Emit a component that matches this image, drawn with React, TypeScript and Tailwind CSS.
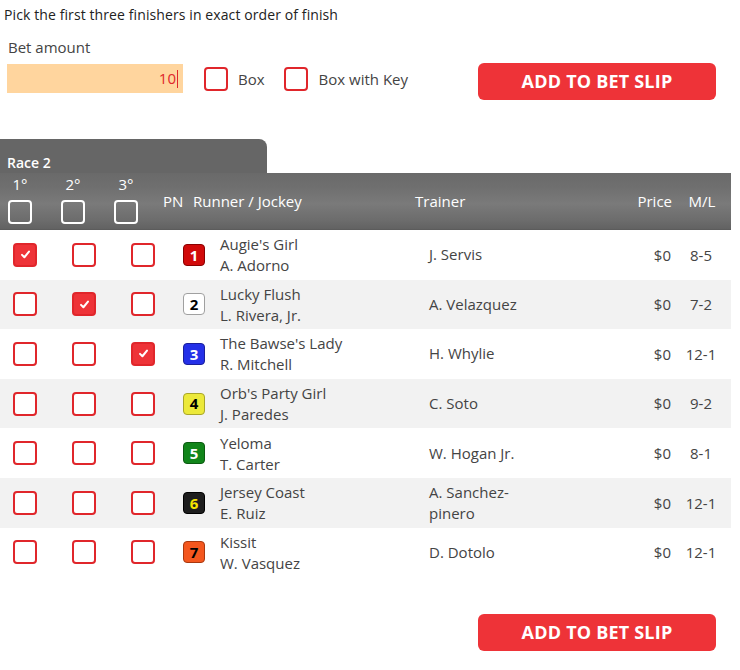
import React from 'react';

type Runner = {
  pn: number;
  name: string;
  jockey: string;
  trainer: string;
  ml: string;
  badge: string;
  picked?: number;
};

const runners: Runner[] = [
  { pn: 1, name: "Augie's Girl", jockey: 'A. Adorno', trainer: 'J. Servis', ml: '8-5', badge: 'bg-[#d10a0a] text-white border-[#8a0000]', picked: 0 },
  { pn: 2, name: 'Lucky Flush', jockey: 'L. Rivera, Jr.', trainer: 'A. Velazquez', ml: '7-2', badge: 'bg-white text-black border-[#a0a0a0]', picked: 1 },
  { pn: 3, name: "The Bawse's Lady", jockey: 'R. Mitchell', trainer: 'H. Whylie', ml: '12-1', badge: 'bg-[#2430e8] text-white border-[#1a1f9a]', picked: 2 },
  { pn: 4, name: "Orb's Party Girl", jockey: 'J. Paredes', trainer: 'C. Soto', ml: '9-2', badge: 'bg-[#ece93a] text-black border-[#a9a62a]' },
  { pn: 5, name: 'Yeloma', jockey: 'T. Carter', trainer: 'W. Hogan Jr.', ml: '8-1', badge: 'bg-[#11851a] text-white border-[#0b5a10]' },
  { pn: 6, name: 'Jersey Coast', jockey: 'E. Ruiz', trainer: 'A. Sanchez-pinero', ml: '12-1', badge: 'bg-[#1e1e1e] text-[#f5e400] border-black' },
  { pn: 7, name: 'Kissit', jockey: 'W. Vasquez', trainer: 'D. Dotolo', ml: '12-1', badge: 'bg-[#f4571e] text-black border-[#a8380f]' },
];

function Check({ on, light }: { on?: boolean; light?: boolean }) {
  if (light) {
    return <div className="h-6 w-6 rounded-[4px] border-2 border-white" />;
  }
  return (
    <div
      className={`flex h-6 w-6 items-center justify-center rounded-[4px] border-2 ${
        on ? 'border-[#e0262b] bg-[#ee3338]' : 'border-[#e0262b] bg-white'
      }`}
    >
      {on && (
        <svg viewBox="0 0 12 12" className="h-[11px] w-[11px]">
          <path d="M2.2 6.4 L4.8 9 L9.8 2.8" fill="none" stroke="white" strokeWidth="2.2" strokeLinecap="round" strokeLinejoin="round" />
        </svg>
      )}
    </div>
  );
}

function AddButton() {
  return (
    <button className="flex h-[37px] w-[238px] items-center justify-center rounded-[6px] bg-[#ee3338] text-[18px] font-bold tracking-[0.2px] text-white">
      ADD TO BET SLIP
    </button>
  );
}

export default function App() {
  return (
    <div className="h-[670px] w-[740px] bg-white font-['Open_Sans',sans-serif] text-[#333]">
      <p className="pl-[4px] pt-[5px] text-[14px] leading-[20px] tracking-[0.1px] text-[#222]">
        Pick the first three finishers in exact order of finish
      </p>

      {/* Bet amount */}
      <div className="mt-[12px] pl-[8px] text-[15px] leading-[20px] text-[#444]">Bet amount</div>
      <div className="mt-[6px] flex items-start pr-[24px]">
        <div className="ml-[7px] mt-[1px] flex h-[29px] w-[176px] items-center justify-end bg-[#ffd59e] pr-[5px] text-[15px] text-[#e0262b]">
          10<span className="ml-[1px] inline-block h-[18px] w-px bg-[#e0262b]" />
        </div>
        <div className="ml-[21px] mt-[4px] flex items-center">
          <Check />
          <span className="ml-[10px] text-[15px] text-[#444]">Box</span>
        </div>
        <div className="ml-[19px] mt-[4px] flex items-center">
          <Check />
          <span className="ml-[11px] text-[15px] text-[#444]">Box with Key</span>
        </div>
        <div className="ml-auto">
          <AddButton />
        </div>
      </div>

      {/* Race table */}
      <div className="mt-[39px] w-[731px]">
        <div className="h-[34px] w-[267px] rounded-tr-[8px] bg-[#666] pl-[7px] pt-[15px] text-[14px] font-semibold leading-[18px] text-white">
          Race 2
        </div>
        <div className="flex h-[57px] items-center border-b border-[#5c5c5c] bg-[linear-gradient(to_bottom,#6a6a6a_0%,#6f6f6f_25%,#7a7a7a_55%,#6c6c6c_85%,#626262_100%)] text-[15px] text-white">
          <div className="flex self-start pl-[8px] pt-[2px]">
            {['1°', '2°', '3°'].map((l) => (
              <div key={l} className="flex w-[53px] flex-col items-start">
                <div className="w-6 text-center leading-[18px]">{l}</div>
                <div className="mt-[7px]">
                  <Check light />
                </div>
              </div>
            ))}
          </div>
          <div className="ml-[-4px] w-[30px]">PN</div>
          <div className="w-[222px]">Runner / Jockey</div>
          <div>Trainer</div>
          <div className="flex-1 text-right">Price</div>
          <div className="ml-[13px] w-[34px] text-center">M/L</div>
          <div className="w-[12px]" />
        </div>

        {runners.map((r, i) => (
          <div
            key={r.pn}
            className={`flex h-[49.6px] items-center text-[15px] ${i % 2 === 1 ? 'bg-[#f2f2f2]' : 'bg-white'}`}
          >
            <div className="flex pl-[13px]">
              {[0, 1, 2].map((c) => (
                <div key={c} className="w-[59px]">
                  <Check on={r.picked === c} />
                </div>
              ))}
            </div>
            <div
              className={`ml-[-7px] flex h-[22px] w-[22px] items-center justify-center rounded-[4px] border text-[15px] font-bold ${r.badge}`}
            >
              {r.pn}
            </div>
            <div className="ml-[15px] w-[209px] pt-[1px] leading-[21px] text-[#444]">
              <div>{r.name}</div>
              <div>{r.jockey}</div>
            </div>
            <div className="w-[104px] leading-[21px] text-[#444]">{r.trainer}</div>
            <div className="flex-1 text-right text-[#444]">$0</div>
            <div className="ml-[10px] w-[40px] text-center text-[#444]">{r.ml}</div>
            <div className="w-[10px]" />
          </div>
        ))}
      </div>

      <div className="mt-[37px] flex justify-end pr-[24px]">
        <AddButton />
      </div>
    </div>
  );
}
